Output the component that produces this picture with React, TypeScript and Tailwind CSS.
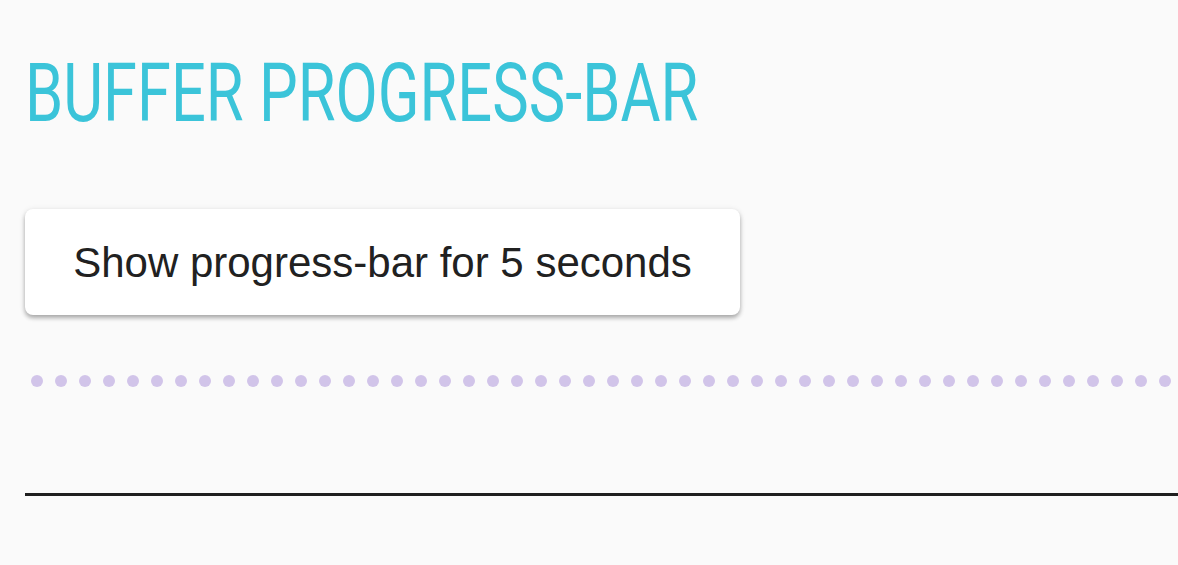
import React from "react";

export default function App() {
  const dots = Array.from({ length: 48 });
  return (
    <div className="min-h-[565px] w-full overflow-hidden bg-[#fafafa] pl-[25px]">
      <div className="pt-[44px] h-[150px]">
        <h1
          className="origin-left scale-x-[0.758] whitespace-nowrap text-[81px] font-normal leading-[100px] text-[#3bc4d9]"
          style={{ fontFamily: "Roboto, 'Liberation Sans', sans-serif" }}
        >
          BUFFER PROGRESS-BAR
        </h1>
      </div>
      <div className="mt-[59px]">
        <button
          className="h-[106px] w-[715px] rounded-[8px] bg-white text-[42px] text-[#212121] shadow-[0_3px_4px_rgba(0,0,0,0.28),0_1px_6px_rgba(0,0,0,0.1)]"
          style={{ fontFamily: "'Liberation Sans', Arial, sans-serif" }}
        >
          Show progress-bar for 5 seconds
        </button>
      </div>
      <div className="mt-[60px] flex h-[12px] w-[1200px]">
        {dots.map((_, i) => (
          <div key={i} className="flex w-[24px] shrink-0 justify-center">
            <div className="h-[12px] w-[12px] rounded-full bg-[#d1c4e9]" />
          </div>
        ))}
      </div>
      <div className="mt-[106px] h-[3px] w-full bg-[#1f1f1f]" />
    </div>
  );
}
